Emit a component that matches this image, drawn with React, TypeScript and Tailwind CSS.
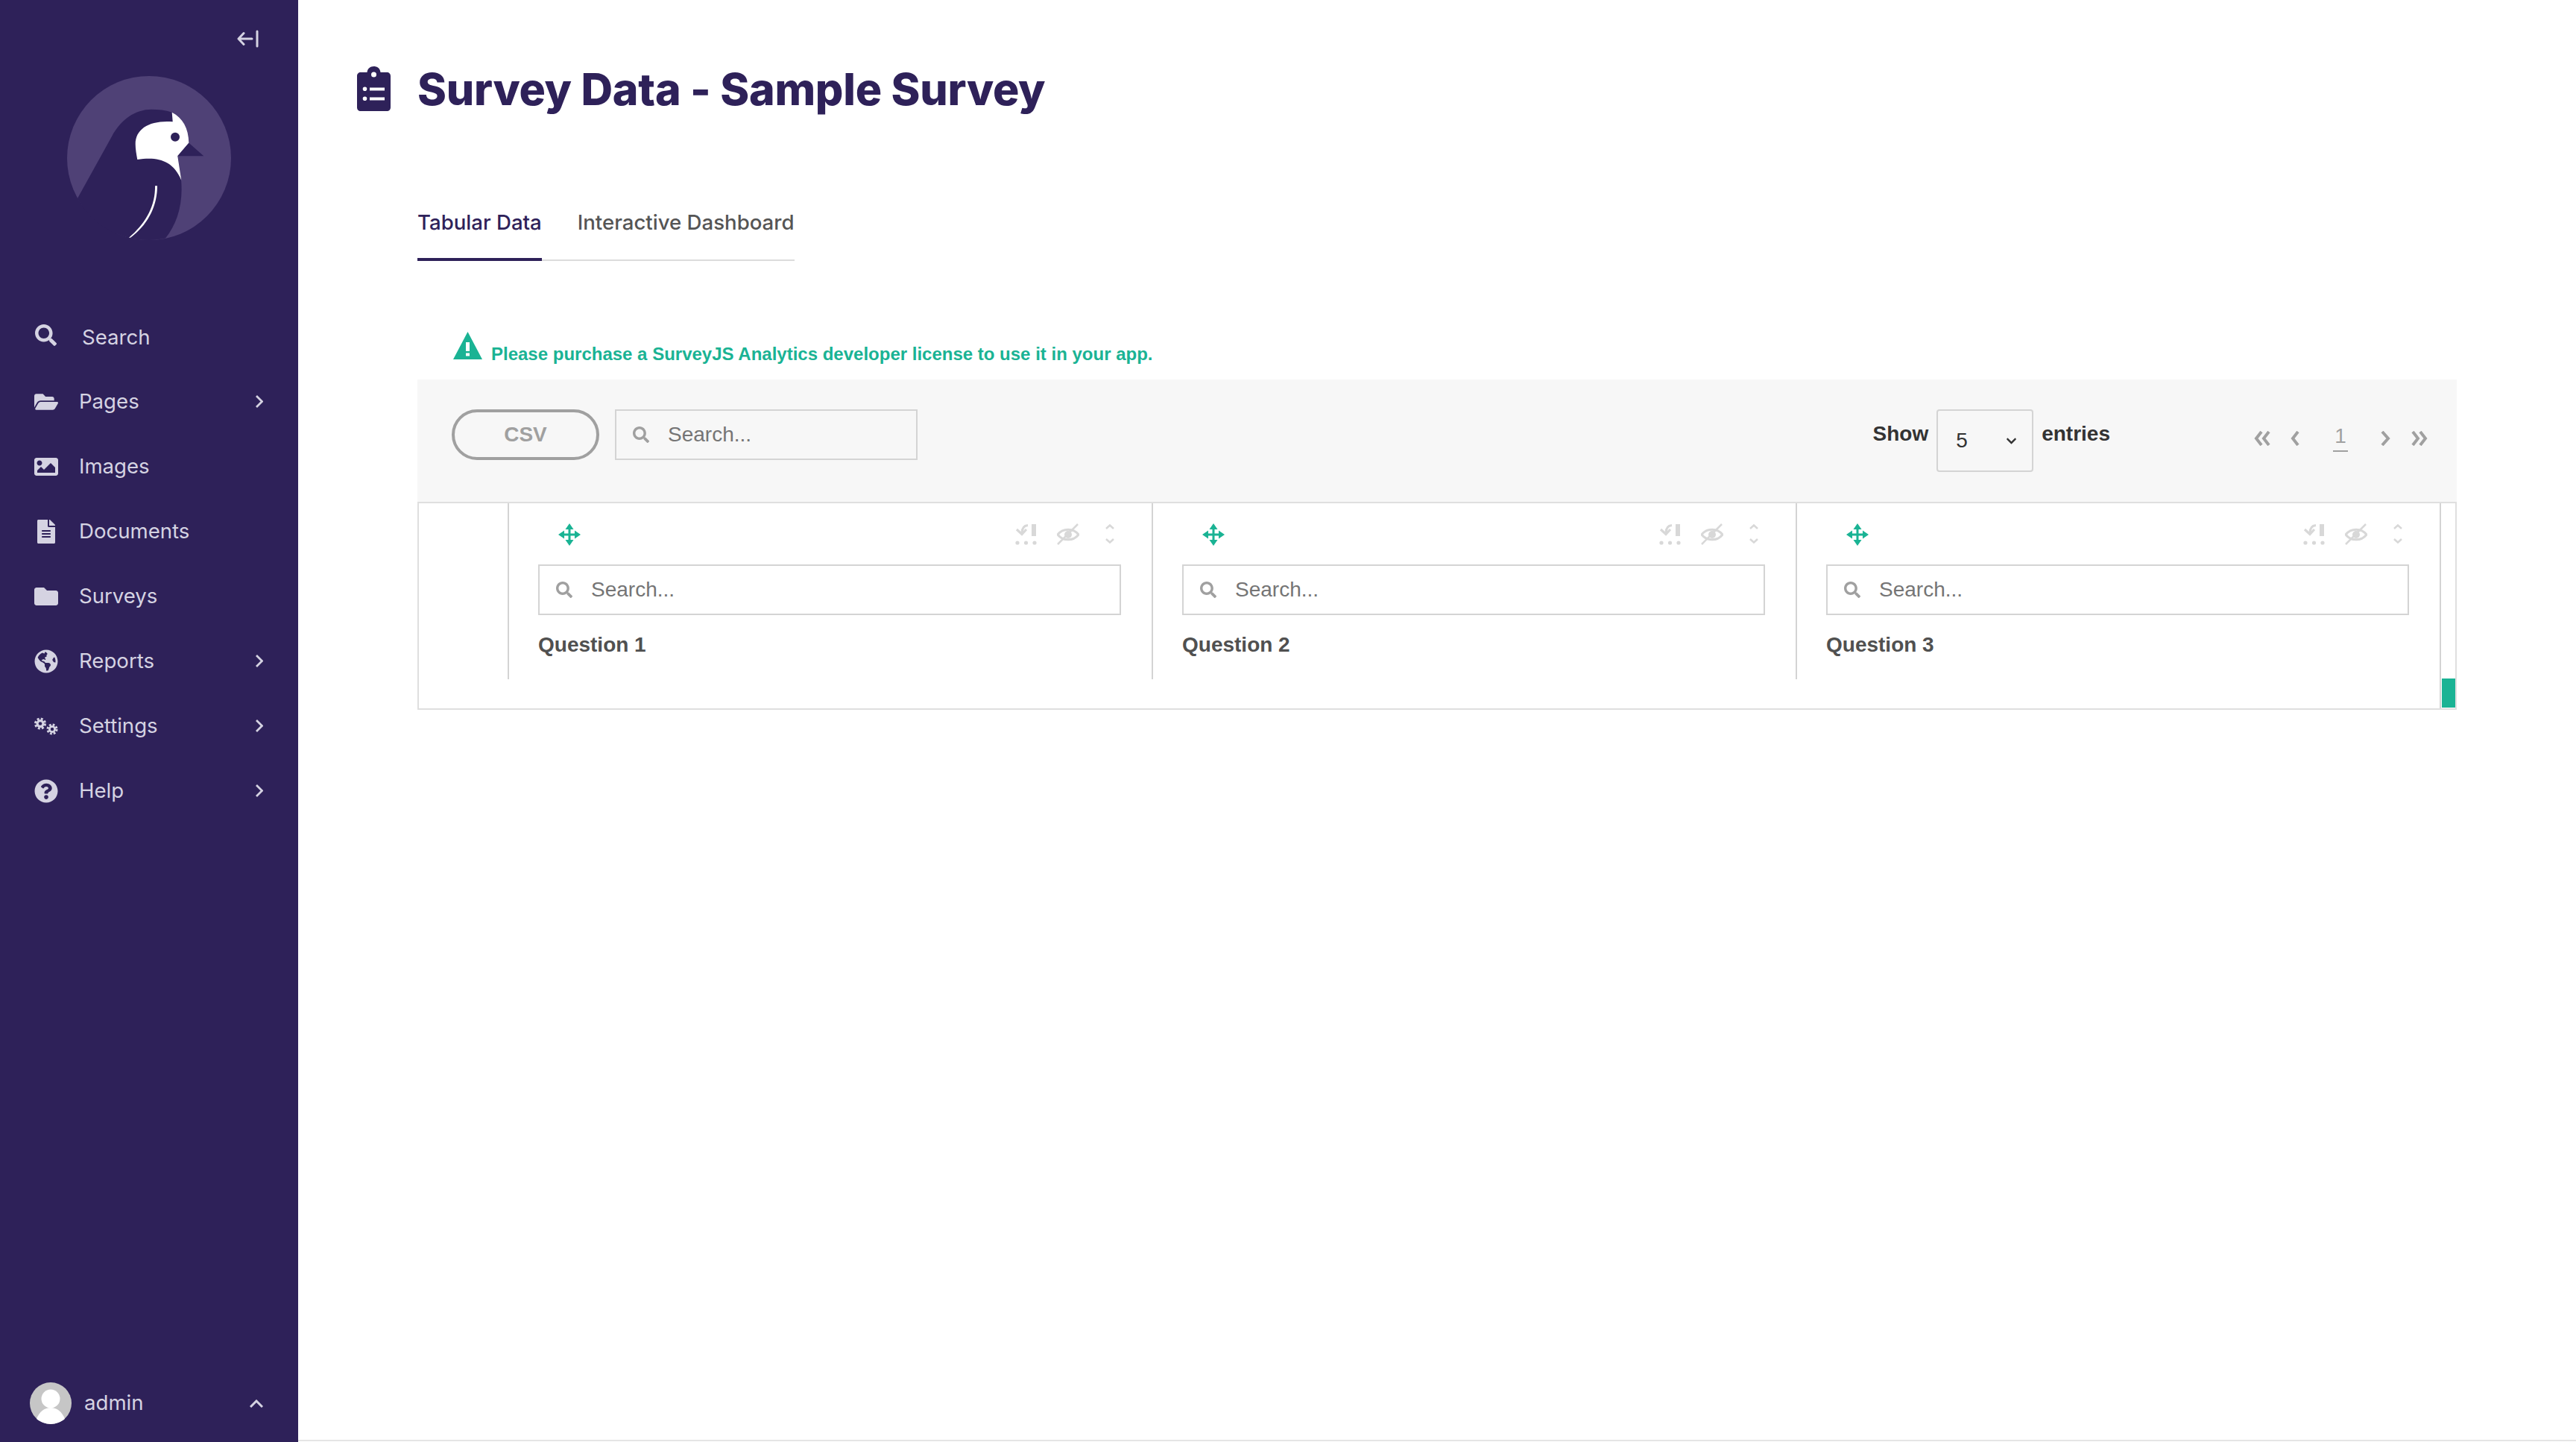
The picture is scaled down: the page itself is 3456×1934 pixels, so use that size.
import {
  FaChevronDown,
  FaFileAlt,
  FaFolder,
  FaFolderOpen,
  FaGlobeAmericas,
  FaImage,
  FaQuestionCircle,
  FaSearch,
} from "react-icons/fa";

function GearsIcon({ className }: { className?: string }) {
  return (
    <svg className={className} viewBox="0 0 32 32" fill="none">
      <circle cx="8" cy="12.500" r="5.500" fill="currentColor" />
      <circle cx="8" cy="12.500" r="6.500" stroke="currentColor" strokeWidth="3" strokeDasharray="2.900 2.200" />
      <circle cx="8" cy="12.500" r="2.300" fill="#2e2159" />
      <circle cx="24" cy="20" r="5" fill="currentColor" />
      <circle cx="24" cy="20" r="6" stroke="currentColor" strokeWidth="3" strokeDasharray="2.700 2" />
      <circle cx="24" cy="20" r="2.200" fill="#2e2159" />
    </svg>
  );
}

const navItems = [
  { label: "Pages", icon: FaFolderOpen, arrow: true },
  { label: "Images", icon: FaImage, arrow: false },
  { label: "Documents", icon: FaFileAlt, arrow: false },
  { label: "Surveys", icon: FaFolder, arrow: false },
  { label: "Reports", icon: FaGlobeAmericas, arrow: true },
  { label: "Settings", icon: GearsIcon, arrow: true },
  { label: "Help", icon: FaQuestionCircle, arrow: true },
];

function Logo() {
  return (
    <svg className="w-[220px] h-[220px]" viewBox="0 0 220 220">
      <circle cx="110" cy="110" r="110" fill="#4f4176" />
      <path
        d="M14 164 L60 81 C72 58 92 44.700 113 44.700 C122 44.700 132 45.500 141 48.700 L153 139 C156 170 148 198 132 217.500 C125 219 118 220 110 220 C68 220 32 198 14 164 Z"
        fill="#2e2159"
      />
      <path
        d="M140.700 48.700 L141.700 61.300 C112 59 91.700 70 91.700 91.300 C91.700 98 93 105 94.300 112 C120 108 142 112 153.300 139.700 L148.300 107.300 L163.300 89.700 C163 70 155 56 140.700 48.700 Z"
        fill="#ffffff"
      />
      <circle cx="145" cy="81.700" r="6" fill="#2e2159" />
      <path d="M163.300 89.700 L183.300 107.300 L148.300 107.300 Z" fill="#2e2159" />
      <path
        d="M118 147.300 L121 147.300 C121 175 108 200 85 216.700 L83 216.700 C105 198 118.500 175 118 147.300 Z"
        fill="#ffffff"
      />
    </svg>
  );
}

function Sidebar() {
  return (
    <aside className="w-[400px] shrink-0 bg-[#2e2159] flex flex-col text-[#d5d3e2] text-[27.6px] font-['Inter',sans-serif]">
      <div className="h-[102px] flex justify-end pt-[40px] pr-[52px]">
        <svg className="w-[30px] h-[24px]" viewBox="0 0 30 24" fill="none" stroke="currentColor" strokeWidth="3" strokeLinecap="round" strokeLinejoin="round">
          <path d="M2 12 H20 M9 4.500 L2 12 L9 19.500 M27 2 V22" />
        </svg>
      </div>
      <div className="pl-[90px]">
        <Logo />
      </div>
      <div className="mt-[86px] h-[87px] flex items-center pl-[47px]">
        <FaSearch className="w-[29px] h-[29px] -mt-[5px]" />
        <span className="ml-[34px] mt-[2px]">Search</span>
      </div>
      {navItems.map((item) => (
        <div key={item.label} className="h-[87px] flex items-center pl-[46px] pr-[47px]">
          <span className="w-[32px] flex justify-center">
            <item.icon className="w-[32px] h-[32px]" />
          </span>
          <span className="ml-[28px] flex-1">{item.label}</span>
          {item.arrow && (
            <svg className="w-[10px] h-[17px]" viewBox="0 0 10 17" fill="none" stroke="currentColor" strokeWidth="2.800">
              <path d="M1 1 L8.500 8.500 L1 16" />
            </svg>
          )}
        </div>
      ))}
      <div className="mt-auto h-[56px] mb-[24px] flex items-center pl-[40px] pr-[47px]">
        <svg className="w-[56px] h-[56px]" viewBox="0 0 56 56">
          <circle cx="28" cy="28" r="28" fill="#c6c6c6" />
          <circle cx="28" cy="22" r="12.500" fill="#ffffff" />
          <path d="M9 49 C13 39 20 34 28 34 C36 34 43 39 47 49 C42 53 35 56 28 56 C21 56 14 53 9 49 Z" fill="#ffffff" />
        </svg>
        <span className="ml-[17px] flex-1">admin</span>
        <svg className="w-[18px] h-[11px]" viewBox="0 0 18 11" fill="none" stroke="currentColor" strokeWidth="3">
          <path d="M1 10 L9 2 L17 10" />
        </svg>
      </div>
    </aside>
  );
}

function SearchBox({ className }: { className: string }) {
  return (
    <div className={`h-[68px] border-2 border-[#d4d4d4] flex items-center ${className}`}>
      <FaSearch className="w-[22px] h-[22px] text-[#a0a0a0] ml-[22px]" />
      <input
        readOnly
        placeholder="Search..."
        className="ml-[25px] flex-1 min-w-0 bg-transparent outline-none text-[28px] placeholder:text-[#757575]"
      />
    </div>
  );
}

function MoveIcon() {
  return (
    <svg className="w-[30px] h-[30px] text-[#1ab394]" viewBox="0 0 30 30" fill="currentColor">
      <path d="M15 0 L20.500 8 L16.500 8 L16.500 13.500 L22 13.500 L22 9.500 L30 15 L22 20.500 L22 16.500 L16.500 16.500 L16.500 22 L20.500 22 L15 30 L9.500 22 L13.500 22 L13.500 16.500 L8 16.500 L8 20.500 L0 15 L8 9.500 L8 13.500 L13.500 13.500 L13.500 8 L9.500 8 Z" />
    </svg>
  );
}

function FilterIcon() {
  return (
    <svg className="w-[29px] h-[29px] text-[#d8d8d8]" viewBox="0 0 29 29" fill="none">
      <rect x="22" y="1" width="6" height="16" fill="currentColor" />
      <circle cx="3" cy="26" r="2.600" fill="currentColor" />
      <circle cx="14.500" cy="26" r="2.600" fill="currentColor" />
      <circle cx="26" cy="26" r="2.600" fill="currentColor" />
      <path d="M17 2.500 C12 3 9 6 9 13 M2 8 L9 14.500 L15 8" stroke="currentColor" strokeWidth="3.200" />
    </svg>
  );
}

function EyeIcon() {
  return (
    <svg className="w-[30px] h-[30px] text-[#d8d8d8]" viewBox="0 0 30 30" fill="none" stroke="currentColor" strokeWidth="3">
      <path d="M1 15 C8 6 22 6 29 15 C22 24 8 24 1 15 Z" />
      <circle cx="15" cy="15" r="5" fill="currentColor" stroke="none" />
      <path d="M1 28 L28 1" strokeWidth="2.500" />
    </svg>
  );
}

function SortIcon() {
  return (
    <svg className="w-[12px] h-[26px] text-[#d8d8d8]" viewBox="0 0 12 26" fill="none" stroke="currentColor" strokeWidth="2.500">
      <path d="M1 6 L6 1.500 L11 6 M1 20 L6 24.500 L11 20" />
    </svg>
  );
}

function QuestionColumn({ title }: { title: string }) {
  return (
    <div className="w-[864px] h-[236px] shrink-0 border-l-2 border-[#d4d4d4] pl-[39px] pr-[41px]">
      <div className="h-[82px] flex items-start pt-[27px]">
        <span className="ml-[27px]">
          <MoveIcon />
        </span>
        <span className="ml-auto">
          <FilterIcon />
        </span>
        <span className="ml-[27px]">
          <EyeIcon />
        </span>
        <span className="ml-[35px] mr-[9px] mt-[1px]">
          <SortIcon />
        </span>
      </div>
      <SearchBox className="bg-white" />
      <div className="mt-[24px] font-bold text-[#505050] text-[28px] leading-[32px]">{title}</div>
    </div>
  );
}

function PagerIcon({ className, box, d }: { className: string; box: string; d: string }) {
  return (
    <svg className={className} viewBox={box} fill="none" stroke="currentColor" strokeWidth="4">
      <path d={d} />
    </svg>
  );
}

function SurveyTable() {
  return (
    <div className="w-[2736px] font-['Liberation_Sans',Arial,sans-serif]">
      <div className="h-[164px] bg-[#f7f7f7] flex items-start pt-[40px] pl-[46px]">
        <button className="w-[198px] h-[68px] rounded-full border-4 border-[#a0a0a0] text-[#a0a0a0] font-bold text-[28px]">CSV</button>
        <SearchBox className="w-[406px] ml-[21px]" />
        <span className="ml-auto mt-[17px] font-bold text-[28px] leading-[32px] text-[#333333]">Show</span>
        <div className="ml-[11px] w-[130px] h-[84px] border-2 border-[#d4d4d4] rounded-[4px] flex items-center pl-[24px] pr-[20px] text-[28px] text-[#333333]">
          <span className="flex-1 mt-[-1px]">5</span>
          <FaChevronDown className="w-[15px] h-[15px] mt-[1px]" />
        </div>
        <span className="ml-[11px] mt-[17px] font-bold text-[28px] leading-[32px] text-[#333333]">entries</span>
        <div className="ml-[193px] mr-[39px] flex items-start text-[#a0a0a0]">
          <PagerIcon className="w-[22px] h-[20px] mt-[29px]" box="0 0 22 20" d="M10 1 L3 10 L10 19 M20 1 L13 10 L20 19" />
          <PagerIcon className="w-[12px] h-[20px] mt-[29px] ml-[27px]" box="0 0 12 20" d="M10 1 L3 10 L10 19" />
          <span className="ml-[45px] w-[20px] h-[57px] border-b-2 border-[#a0a0a0] text-center text-[28px] leading-[28px] pt-[22px]">1</span>
          <PagerIcon className="w-[14px] h-[20px] mt-[29px] ml-[43px]" box="0 0 14 20" d="M3 1 L11 10 L3 19" />
          <PagerIcon className="w-[23px] h-[20px] mt-[29px] ml-[27px]" box="0 0 23 20" d="M3 1 L10 10 L3 19 M13 1 L20 10 L13 19" />
        </div>
      </div>
      <div className="h-[279px] border-2 border-t-[2px] border-[#dfdfdf] flex items-start">
        <div className="w-[119px] shrink-0" />
        <QuestionColumn title="Question 1" />
        <QuestionColumn title="Question 2" />
        <QuestionColumn title="Question 3" />
        <div className="flex-1 h-full border-l-2 border-[#d4d4d4] flex flex-col justify-end">
          <div className="h-[39px] bg-[#1ab394] ml-[1px] mb-[1px]" />
        </div>
      </div>
    </div>
  );
}

export default function App() {
  return (
    <div className="h-[1934px] w-[3456px] flex bg-white overflow-hidden">
      <Sidebar />
      <main className="flex-1 flex flex-col pl-[80px] pb-[2px] border-b-2 border-[#e5e5e5] h-[1933px]">
        <div className="flex items-center mt-[88px] h-[62px] font-['Inter',sans-serif] text-[#2e2159]">
          <svg className="w-[45px] h-[60px] -ml-[1px]" viewBox="0 0 45 60" fill="currentColor" fillRule="evenodd">
            <path d="M5 8 H13.500 C14 3 17.500 0 22.500 0 C27.500 0 31 3 31.500 8 H40 C43 8 45 10 45 13 V55 C45 58 43 60 40 60 H5 C2 60 0 58 0 55 V13 C0 10 2 8 5 8 Z M22.500 7.500 A3.500 3.500 0 1 0 22.500 14.500 A3.500 3.500 0 1 0 22.500 7.500 Z M10.500 27.500 A2.800 2.800 0 1 0 10.500 33.100 A2.800 2.800 0 1 0 10.500 27.500 Z M17 28.500 V32.500 H37 V28.500 Z M10.500 40.500 A2.800 2.800 0 1 0 10.500 46.100 A2.800 2.800 0 1 0 10.500 40.500 Z M17 41.500 V45.500 H37 V41.500 Z" />
          </svg>
          <h1 className="ml-[36px] mt-[1px] text-[59px] font-extrabold tracking-[-0.25px] leading-[62px]">Survey Data - Sample Survey</h1>
        </div>
        <div className="ml-[80px] mt-[120px] w-fit flex font-['Inter',sans-serif] text-[27.6px] font-medium border-b-2 border-[#dcdcdc] h-[80px]">
          <div className="h-[80px] border-b-4 border-[#2e2159] text-[#2e2159] pt-[8px]">Tabular Data</div>
          <div className="ml-[48px] text-[#555555] pt-[8px]">Interactive Dashboard</div>
        </div>
        <div className="ml-[80px] mt-[93px] h-[66px] pl-[48px] flex items-start text-[#1ab394] font-['Liberation_Sans',Arial,sans-serif] font-bold text-[24px]">
          <svg className="w-[39px] h-[37px] mt-[2px]" viewBox="0 0 39 37" fill="currentColor" fillRule="evenodd">
            <path d="M19.500 0 L39 37 H0 Z M17 14 V26 H22 V14 Z M17 28.500 V32.500 H22 V28.500 Z" />
          </svg>
          <span className="ml-[12px] mt-[18px] leading-[28px]">Please purchase a SurveyJS Analytics developer license to use it in your app.</span>
        </div>
        <div className="ml-[80px]">
          <SurveyTable />
        </div>
      </main>
    </div>
  );
}
